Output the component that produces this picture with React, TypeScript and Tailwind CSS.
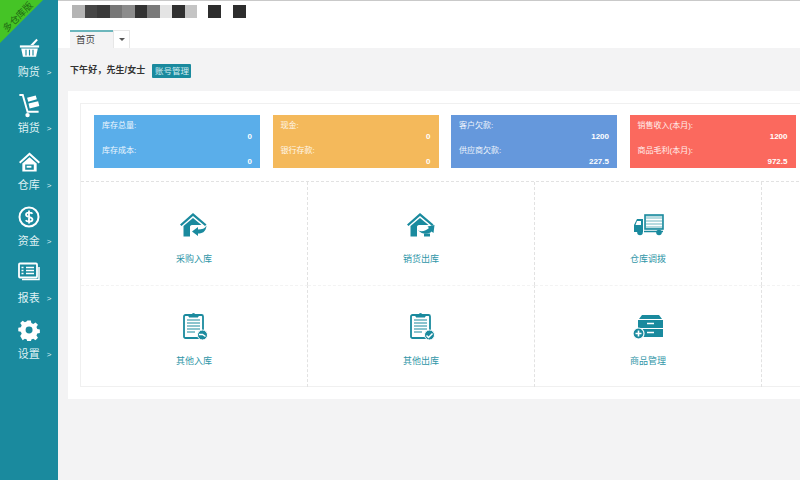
import React from "react";

const font = { fontFamily: '"Liberation Sans","Noto Sans CJK SC",sans-serif' };

const Basket = () => (
  <svg width="21" height="20" viewBox="0 0 24 22" fill="white">
    <path d="M1 8h22v2.500H1z" />
    <path d="M2.500 11.500h19L19.500 21H4.500z" />
    <path d="M13 7.500L20 .5l1.500 1.500L16.500 7.500z" />
    <path d="M8 13v6.500M12 13v6.500M16 13v6.500" stroke="#1a8a9e" strokeWidth="1.300" />
  </svg>
);
const Cart = () => (
  <svg width="22" height="25" viewBox="0 0 22 26" fill="none" stroke="white" strokeWidth="2">
    <path d="M1 2h3.500l5 17.500H21" />
    <circle cx="9.500" cy="23" r="2.300" fill="white" stroke="none" />
    <path d="M9 5l9-2.500 1.200 4-9 2.500zM10.500 11l10-2.500 1.200 5-10 2.500z" fill="white" stroke="none" />
  </svg>
);
const House = () => (
  <svg width="21" height="20" viewBox="0 0 22 20" fill="white">
    <path d="M11 0L0 10l1.400 1.500L11 3l9.600 8.500L22 10z" />
    <path d="M3.500 11.500L11 5l7.500 6.500V20H3.500zM6.500 12.500V18H15.500v-5.500z" fillRule="evenodd" />
    <path d="M8 14h5v2H8z" />
  </svg>
);
const Dollar = () => (
  <svg width="22" height="22" viewBox="0 0 22 22" fill="none">
    <circle cx="11" cy="11" r="9.500" stroke="white" strokeWidth="2" />
    <path d="M14.500 7.800C13.500 6.400 8 6 8 8.800c0 3 6.500 1.500 6.500 4.600 0 2.800-5.500 2.600-6.800.8M11 4.500v13" stroke="white" strokeWidth="1.800" />
  </svg>
);
const Report = () => (
  <svg width="22" height="20" viewBox="0 0 22 20" fill="none" stroke="white">
    <rect x="1" y="1.500" width="18" height="14" rx="1" strokeWidth="1.800" />
    <path d="M21 5v12.500H4" strokeWidth="1.500" />
    <path d="M3.500 5.500h2M3.500 8.500h2M3.500 11.500h2M8 5.500h8M8 8.500h8M8 11.500h8" strokeWidth="1.600" />
  </svg>
);
const Gear = () => (
  <svg width="22" height="22" viewBox="0 0 22 22" fill="white">
    <path
      fillRule="evenodd"
      d="M9 0h4l.6 3 2.200.9 2.600-1.700 2.800 2.800-1.700 2.600.9 2.200 3 .6v4l-3 .6-.9 2.200 1.700 2.600-2.800 2.800-2.600-1.700-2.200.9-.6 3H9l-.6-3-2.200-.9-2.600 1.700L.8 17.800l1.700-2.600-.9-2.200-3-.6V8.400l3-.6.9-2.200L.8 3l2.800-2.800 2.600 1.700L8.400 1zM11 7a4 4 0 100 8 4 4 0 000-8z"
      transform="translate(1.500 1.500) scale(.87)"
    />
  </svg>
);

const T = "#1a8a9e";

const HouseIn = ({ out }: { out?: boolean }) => (
  <svg width="28" height="24" viewBox="0 0 28 24">
    <path d="M13 0L0 11.500l1.500 1.500L13 3l12 10 1.500-1.500z" fill={T} />
    <path d="M3.500 13L13 5l8.500 7H12c-1.500 0-2 1-2 2v9.500H3.500z" fill={T} />
    {out ? (
      <>
        <path d="M11 17.500c4 1.500 8 .5 11-2.500l-1.500-1.500 7-1.500-1 8-2-1.500c-2 2.500-9 4-13.500-1.500z" fill={T} />
        <path d="M17 20.500h6v3h-6z" fill={T} />
      </>
    ) : (
      <path d="M18 14l-6 4.500 6 4.500v-2.500c3.500 0 8-1 8.500-8-1.500 3-4.500 4-8.500 4z" fill={T} />
    )}
  </svg>
);

const Truck = () => (
  <svg width="31" height="22" viewBox="0 0 31 22">
    <rect x="12" y="1" width="18" height="14" fill="#b7dbe0" stroke={T} strokeWidth="1.600" />
    <path d="M13 5.500h16M13 8.500h16M13 11.500h16" stroke="white" strokeWidth="1" />
    <path d="M1 18v-7l3-6h6v13H8M4 7l-1.500 4H8V7z" fill={T} fillRule="evenodd" />
    <path d="M11 17.500h19" stroke={T} strokeWidth="1.500" />
    <circle cx="7" cy="18.500" r="2.800" fill={T} />
    <circle cx="26" cy="18.500" r="2.800" fill={T} />
  </svg>
);

const Clipboard = ({ out }: { out?: boolean }) => (
  <svg width="25" height="29" viewBox="0 0 25 29" fill="none">
    <rect x="1" y="3" width="19" height="23" rx="1.500" stroke={T} strokeWidth="1.800" />
    <path d="M6 5V2.500h2.800a2 2 0 013.400 0H15V5z" fill={T} stroke={T} />
    <path d="M4 8h13M4 11h13M4 14h13M4 17h13M4 20h8" stroke={T} strokeWidth="1.200" />
    <circle cx="19.500" cy="23" r="5" fill={T} stroke="white" strokeWidth="1" />
    {out ? (
      <path d="M16.500 23.500l2 2 4-4" stroke="white" strokeWidth="1.500" />
    ) : (
      <path d="M16 22.500h3.500l3 2" stroke="white" strokeWidth="1.500" />
    )}
  </svg>
);

const Cabinet = () => (
  <svg width="32" height="26" viewBox="0 0 32 26">
    <path d="M7 5l3-4h17l3 4z" fill={T} />
    <rect x="6" y="6" width="25" height="8" fill={T} />
    <rect x="6" y="15" width="25" height="8" fill={T} />
    <path d="M15 9.500h7M15 18.500h7" stroke="white" strokeWidth="1.600" />
    <circle cx="6.500" cy="19.500" r="5.500" fill={T} stroke="white" strokeWidth="1.200" />
    <path d="M3.500 19.500h6M6.500 16.500v6" stroke="white" strokeWidth="1.600" />
  </svg>
);

const navItems: [React.ReactNode, string, string, string][] = [
  [<Basket />, "购货", "h-[56px]", "pt-0"],
  [<Cart />, "销货", "h-[57px]", "pt-[3px]"],
  [<House />, "仓库", "h-[56px]", "pt-[2px]"],
  [<Dollar />, "资金", "h-[57px]", "pt-0"],
  [<Report />, "报表", "h-[56px]", "pb-[4px]"],
  [<Gear />, "设置", "h-[56px]", "pt-0"],
];

const stats = [
  { bg: "bg-[#5aaeea]", a: "库存总量:", av: "0", b: "库存成本:", bv: "0" },
  { bg: "bg-[#f4b95b]", a: "现金:", av: "0", b: "银行存款:", bv: "0" },
  { bg: "bg-[#6598dc]", a: "客户欠款:", av: "1200", b: "供应商欠款:", bv: "227.5" },
  { bg: "bg-[#fb695e]", a: "销售收入(本月):", av: "1200", b: "商品毛利(本月):", bv: "972.5" },
];

const mosaic = [
  "bg-[#b4b4b4]", "bg-[#464646]", "bg-[#3a3a3a]", "bg-[#777777]", "bg-[#8c8c8c]",
  "bg-[#333333]", "bg-[#7a7a7a]", "bg-[#e4e4e4]", "bg-[#303030]", "bg-[#c4c4c4]",
];

const cells: [React.ReactNode, string, string][] = [
  [<HouseIn />, "采购入库", ""],
  [<HouseIn out />, "销货出库", ""],
  [<Truck />, "仓库调拨", ""],
  [null, "", ""],
  [<Clipboard />, "其他入库", "ml-[3px]"],
  [<Clipboard out />, "其他出库", "ml-[3px]"],
  [<Cabinet />, "商品管理", ""],
  [null, "", ""],
];

function StatCard({ s }: { s: (typeof stats)[number] }) {
  return (
    <div className={`${s.bg} w-[166px] h-[53px] shrink-0 px-2 pt-[5px] text-white text-[8px] leading-[11px]`}>
      <div className="text-white/90">{s.a}</div>
      <div className="text-right font-bold">{s.av}</div>
      <div className="mt-[3px] text-white/90">{s.b}</div>
      <div className="text-right font-bold">{s.bv}</div>
    </div>
  );
}

export default function App() {
  return (
    <div className="relative flex w-[800px] h-[480px] overflow-hidden bg-[#f3f3f4]" style={font}>
      <aside className="w-[58px] shrink-0 bg-[#1a8a9e] pt-[35px] flex flex-col text-white">
        {navItems.map(([icon, label, h, adj]) => (
          <div key={label} className={`${h} flex flex-col items-center`}>
            <div className={`${adj} h-[26px] flex items-center justify-center`}>{icon}</div>
            <div className="flex items-center gap-[7px] mt-[2px] pl-[11px] text-[11px] leading-[16px] text-[#dff1f4]">
              <span>{label}</span>
              <span className="text-[8px] leading-[16px] mt-[2px]">&gt;</span>
            </div>
          </div>
        ))}
      </aside>

      <div className="absolute left-0 top-0 w-0 h-0 border-t-[43px] border-r-[43px] border-t-[#45c426] border-r-transparent"></div>
      <div className="absolute left-[-3px] top-[11px] w-[42px] h-[12px] -rotate-45 text-[#1f6a14] text-[9.500px] leading-[12px] text-center whitespace-nowrap">
        多仓库版
      </div>

      <main className="flex-1 min-w-0 flex flex-col">
        <header className="bg-white h-[48px] shrink-0 border-t border-[#c9c9c9]">
          <div className="flex items-center h-[29px] pl-[14px] pb-[8px]">
            <div className="flex">
              {mosaic.map((c, i) => (
                <div key={i} className={`${c} w-[12.500px] h-[13px]`}></div>
              ))}
            </div>
            <div className="w-[13px] h-[13px] bg-[#2d2d2d] ml-[11px]"></div>
            <div className="w-[13px] h-[13px] bg-[#2d2d2d] ml-[12px]"></div>
          </div>
          <div className="flex pl-[12px]">
            <div className="w-[43px] h-[18px] border-t-2 border-[#6cb6bc] bg-[#f3f3f4] text-[9.500px] leading-[16px] pl-[6px] text-[#444]">
              首页
            </div>
            <div className="w-[17px] h-[18px] border border-b-0 border-[#e7e7e7] flex items-center justify-center">
              <div className="w-0 h-0 border-x-[3px] border-t-[3px] border-x-transparent border-t-[#555]"></div>
            </div>
          </div>
        </header>

        <div className="flex items-center gap-[7px] h-[43px] pl-[12px] pt-[3px]">
          <span className="text-[9px] font-bold text-[#333] tracking-[0.1px]">下午好，先生/女士</span>
          <span className="bg-[#1a8a9e] text-[#d5eef2] text-[8.500px] leading-[14px] h-[14px] w-[39px] text-center rounded-[1px]">
            账号管理
          </span>
        </div>

        <section className="ml-[10px] w-[760px] h-[308px] bg-white shrink-0 pl-[12px] pt-[12px]">
          <div className="w-[900px] h-[284px] border border-[#f0f0f0] flex flex-col">
            <div className="flex gap-[12.500px] h-[77px] pl-[13px] pt-[11px] shrink-0">
              {stats.map((s) => (
                <StatCard key={s.a} s={s} />
              ))}
            </div>
            <div className="grid grid-cols-[227px_227px_227px_227px] grid-rows-[102.500px_102.500px] border-t border-dashed border-[#e2e2e2]">
              {cells.map(([icon, label, adj], i) => (
                <div
                  key={i}
                  className={`flex flex-col items-center border-r border-dashed border-r-[#e2e2e2] ${
                    i < 4 ? "pt-[27px]" : "border-t border-t-[#f3f3f3] pt-[25px]"
                  }`}
                >
                  <div className={`${adj} h-[32px] flex items-center justify-center`}>{icon}</div>
                  <div className="text-[9px] leading-[12px] mt-[12px] text-[#2f96a8]">{label}</div>
                </div>
              ))}
            </div>
          </div>
        </section>
      </main>
    </div>
  );
}
